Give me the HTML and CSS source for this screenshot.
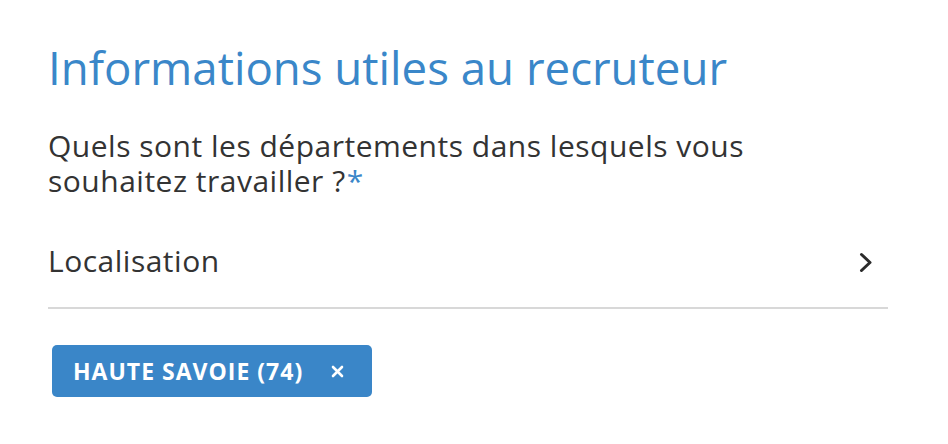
FILE: index.html
```html
<!DOCTYPE html>
<html lang="fr">
<head>
    <meta charset="UTF-8">
    <meta name="viewport" content="width=device-width, initial-scale=1.0">
    <title>Informations utiles au recruteur</title>
    <link rel="stylesheet" href="styles.css">
</head>
<body>
    <div class="panel">
        <h1 class="panel-title">Informations utiles au recruteur</h1>
        <p class="question">Quels sont les départements dans lesquels vous souhaitez travailler ?<span class="required">*</span></p>
        <div class="select-row">
            <span class="select-label">Localisation</span>
            <svg class="chevron" width="14" height="21" viewBox="0 0 14 21">
                <path d="M2.5 2.5 L11 10.5 L2.5 18.5" fill="none" stroke="#2b2b2b" stroke-width="3" stroke-linecap="round" stroke-linejoin="round"/>
            </svg>
        </div>
        <div class="tags">
            <div class="tag">
                <span class="tag-text">HAUTE SAVOIE (74)</span>
                <svg class="tag-close" width="13" height="13" viewBox="0 0 13 13">
                    <path d="M2 2 L11 11 M11 2 L2 11" stroke="#ffffff" stroke-width="2.6" stroke-linecap="round"/>
                </svg>
            </div>
        </div>
    </div>
</body>
</html>
```

FILE: styles.css
```css
body {
    margin: 0;
    background-color: #ffffff;
    font-family: "Open Sans", "Noto Sans", sans-serif;
    color: #333333;
}
.panel {
    width: 840px;
    padding: 36px 48px;
}
.panel-title {
    margin: 0;
    font-size: 45.6px;
    font-weight: 400;
    color: #3a87c9;
    line-height: 62px;
}
.question {
    margin: 30px 0 0;
    width: 760px;
    font-size: 30px;
    line-height: 35px;
    letter-spacing: 0.5px;
}
.required {
    display: inline-block;
    margin-left: 1px;
    line-height: 35px;
    color: #3a87c9;
}
.select-row {
    display: flex;
    justify-content: space-between;
    align-items: center;
    margin-top: 16px;
    height: 93px;
    border-bottom: 2px solid #d8d8d8;
}
.select-label {
    font-size: 30px;
    line-height: 32px;
    letter-spacing: 0.5px;
}
.chevron {
    margin: 4px 15px 0 0;
}
.tags {
    display: flex;
    margin-top: 36px;
    padding-left: 4px;
}
.tag {
    display: flex;
    align-items: center;
    height: 52px;
    padding: 0 28px 0 21px;
    background-color: #3a86c8;
    border-radius: 5px;
    color: #ffffff;
    font-weight: 700;
}
.tag-text {
    font-size: 23px;
    letter-spacing: 1px;
}
.tag-close {
    margin-left: 28px;
}
```
